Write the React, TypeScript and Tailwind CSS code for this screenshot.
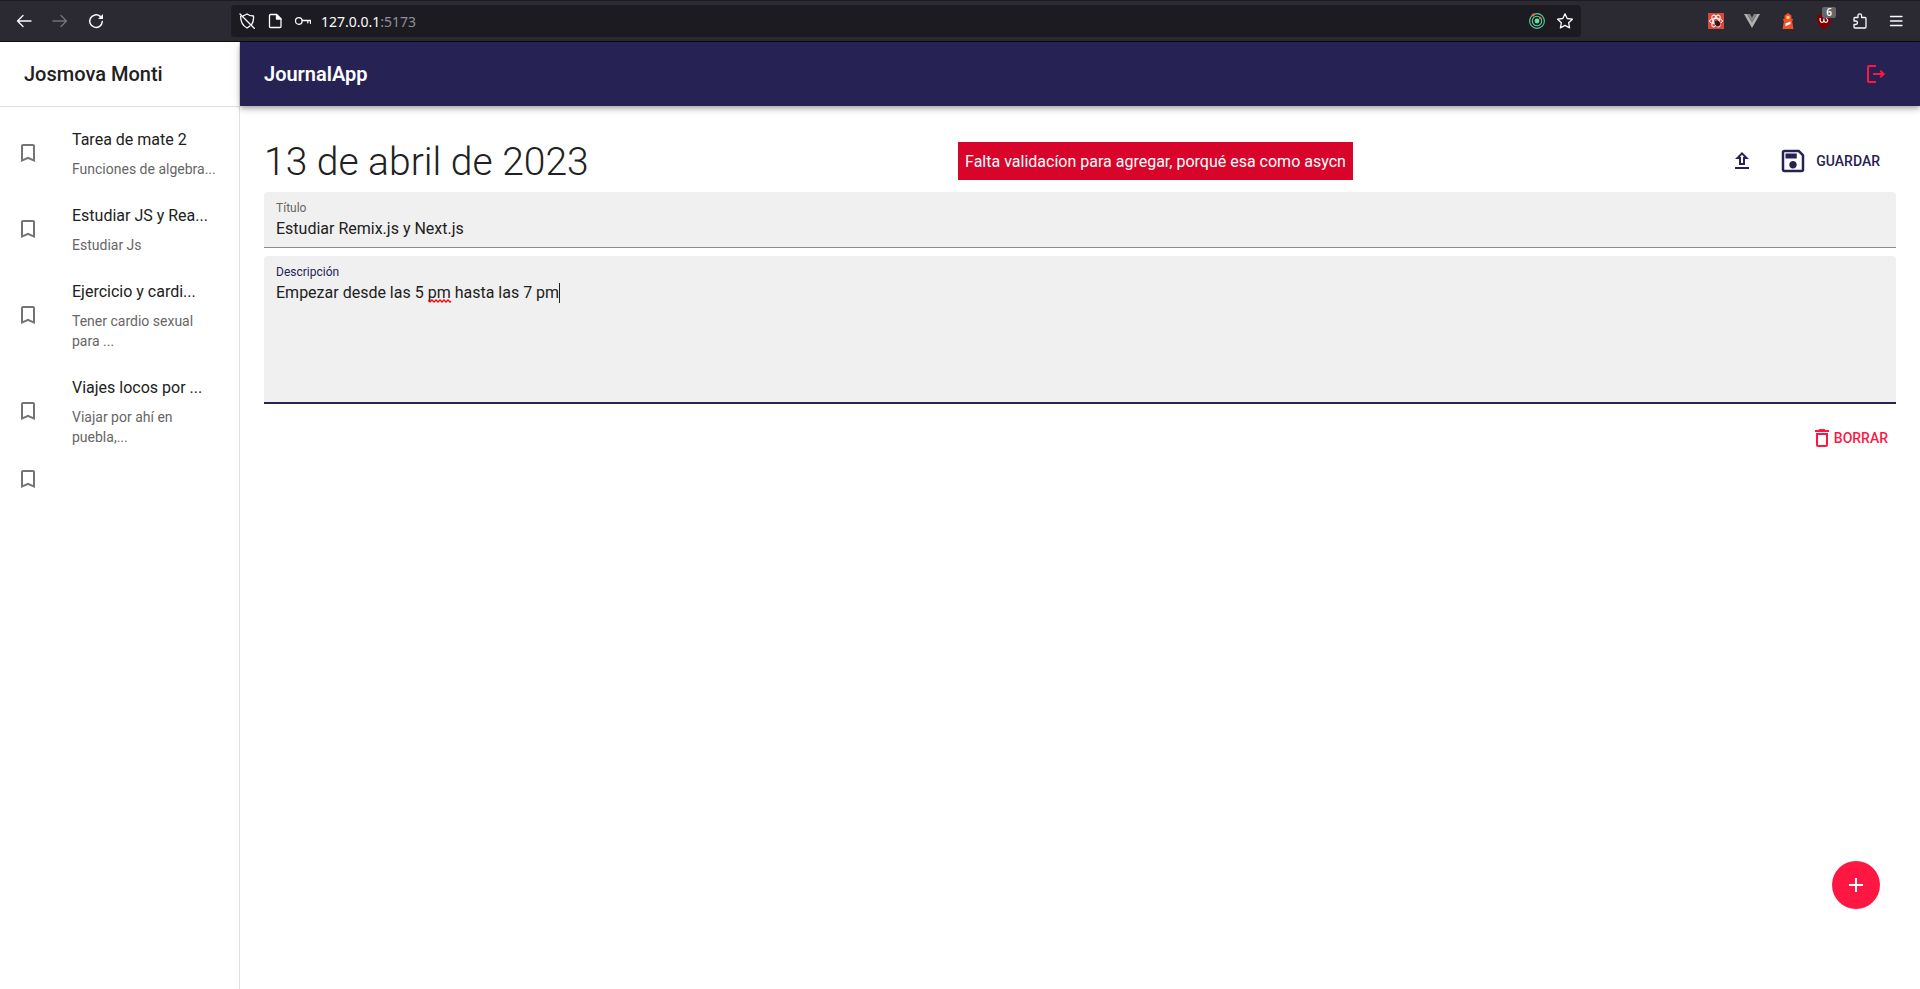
import React from 'react';

type IconProps = { d: string; className?: string };

function Icon({ d, className = 'size-6' }: IconProps) {
  return (
    <svg viewBox="0 0 24 24" className={`shrink-0 ${className}`} fill="currentColor" aria-hidden="true">
      <path d={d} />
    </svg>
  );
}

const paths = {
  bookmark: 'M17 3H7c-1.1 0-1.99.9-1.99 2L5 21l7-3 7 3V5c0-1.1-.9-2-2-2zm0 15-5-2.18L7 18V5h10v13z',
  logout:
    'm17 8-1.41 1.41L17.17 11H9v2h8.17l-1.58 1.58L17 16l4-4-4-4zM5 5h7V3H5c-1.1 0-2 .9-2 2v14c0 1.1.9 2 2 2h7v-2H5V5z',
  upload: 'M9 16h6v-6h4l-7-7-7 7h4v6zm3-10.17L14.17 8H13v6h-2V8H9.83L12 5.83zM5 18h14v2H5z',
  save: 'M17 3H5c-1.11 0-2 .9-2 2v14c0 1.1.89 2 2 2h14c1.1 0 2-.9 2-2V7l-4-4zm2 16H5V5h11.17L19 7.83V19zm-7-7c-1.66 0-3 1.34-3 3s1.34 3 3 3 3-1.34 3-3-1.34-3-3-3zM6 6h9v4H6z',
  trash: 'M6 19c0 1.1.9 2 2 2h8c1.1 0 2-.9 2-2V7H6v12zM8 9h8v10H8V9zm7.5-5-1-1h-5l-1 1H5v2h14V4z',
  add: 'M19 13h-6v6h-2v-6H5v-2h6V5h2v6h6v2z',
};

type LineIconProps = { children: React.ReactNode; className?: string };

function LineIcon({ children, className = '' }: LineIconProps) {
  return (
    <svg
      viewBox="0 0 16 16"
      className={`size-4 shrink-0 ${className}`}
      fill="none"
      stroke="currentColor"
      strokeWidth="1.3"
      strokeLinecap="round"
      strokeLinejoin="round"
      aria-hidden="true"
    >
      {children}
    </svg>
  );
}

function BrowserBar() {
  return (
    <header className="flex h-[42px] shrink-0 items-center border-t border-b border-t-[#1c1b22] border-b-[#0c0c0d] bg-[#2b2a33] text-[#fbfbfe]">
      <nav className="flex w-[231px] shrink-0 items-center gap-5 pl-4" aria-label="Navegador">
        <button type="button" aria-label="Atrás">
          <LineIcon>
            <path d="M15 8H1.5M7 2.5 1.5 8 7 13.5" />
          </LineIcon>
        </button>
        <button type="button" aria-label="Adelante" className="text-[#74737a]">
          <LineIcon>
            <path d="M1 8h13.5M9 2.5 14.5 8 9 13.5" />
          </LineIcon>
        </button>
        <button type="button" aria-label="Recargar">
          <LineIcon>
            <path d="M14.3 8.5A6.3 6.3 0 1 1 12.2 3.4" strokeWidth="1.5" />
            <path d="M15 1v5h-5z" fill="currentColor" stroke="none" />
          </LineIcon>
        </button>
      </nav>
      <div className="flex h-8 w-[1350px] min-w-0 items-center rounded bg-[#1c1b22] px-2">
        <LineIcon>
          <path d="M4.5 2.6C6 2.300 7 1.700 8 1c1.700 1.300 3.700 2 6.500 2 .3 3.500-.3 6.300-1.900 8.600M1.600 3.300c0 5.400 1.500 9.200 6.400 11.700 1.100-.6 2-1.200 2.800-2M1 1l14.500 14.500" />
        </LineIcon>
        <LineIcon className="ml-3">
          <path d="M3.5 1.500h6L14 6v7.500a1 1 0 0 1-1 1H3.500a1 1 0 0 1-1-1v-11a1 1 0 0 1 1-1z" />
          <path d="M9.500 1.500V6H14z" fill="currentColor" />
        </LineIcon>
        <LineIcon className="ml-3">
          <circle cx="3.8" cy="8" r="3.300" />
          <path d="M7.200 7.500h8.300v2.800M12.800 7.500v2.300" />
        </LineIcon>
        <div className="ml-2.5 flex-1 pt-0.5 font-['Noto_Sans',sans-serif] text-sm">
          127.0.0.1<span className="text-[#8f8f9d]">:5173</span>
        </div>
        <svg viewBox="0 0 16 16" className="size-4 shrink-0" fill="none" stroke="#5ad1a0" strokeWidth="1.1">
          <circle cx="8" cy="8" r="7.4" />
          <circle cx="8" cy="8" r="4.7" />
          <circle cx="8" cy="8" r="2.4" fill="#5ee6a8" stroke="none" />
          <circle cx="4.2" cy="1.9" r="1.5" fill="#f26b2c" stroke="none" />
          <circle cx="11.2" cy="5" r="1.3" fill="#f26b2c" stroke="none" />
        </svg>
        <button type="button" aria-label="Marcador" className="ml-3">
          <LineIcon>
            <path d="m8 .8 2.200 4.700 5.200.7-3.800 3.500 1 5.200L8 12.400l-4.600 2.500 1-5.200L.6 6.200l5.200-.7z" />
          </LineIcon>
        </button>
      </div>
      <div className="ml-auto flex items-center gap-5 pr-4">
        <svg viewBox="0 0 16 16" className="size-4" fill="none">
          <path fill="#d9483b" d="M0 0h16v16H0z" />
          <g stroke="#fff" strokeWidth="1">
            <ellipse cx="8" cy="8" rx="6.5" ry="2.6" />
            <ellipse cx="8" cy="8" rx="6.5" ry="2.6" transform="rotate(60 8 8)" />
            <ellipse cx="8" cy="8" rx="6.5" ry="2.6" transform="rotate(120 8 8)" />
          </g>
          <ellipse cx="9.5" cy="10.500" rx="2.600" ry="3" fill="#3b1310" transform="rotate(-40 9.500 10.500)" />
        </svg>
        <svg viewBox="0 0 16 16" className="size-4">
          <path fill="#b0b0b0" d="M0 1h3.200L8 9.300 12.800 1H16L8 15z" />
          <path fill="#858585" d="M3.200 1H6l2 3.500L10 1h2.800L8 9.300z" />
        </svg>
        <svg viewBox="0 0 16 16" className="size-4">
          <path fill="#f0512d" d="M8 0 4.500 2.500V6H3v1.500h1L2.500 16h11L12 7.500h1V6h-1.500V2.500z" />
          <circle cx="8" cy="4.500" r="1.700" fill="#ffd76a" />
          <path fill="#fff" d="m5.500 10.500 5-2v2.500l-5 2.200z" />
        </svg>
        <div className="relative">
          <svg viewBox="0 0 16 16" className="size-4">
            <path fill="#800000" d="M8 0c2 1.500 4 2 7 2 0 6 .2 10.500-7 14C.8 12.500 1 8 1 2c3 0 5-.5 7-2z" />
            <path
              d="M4.200 5v2.500a1.800 1.800 0 0 0 3.700 0V5.500v2a1.900 1.900 0 1 0 2-2"
              fill="none"
              stroke="#fff"
              strokeWidth="1.2"
            />
          </svg>
          <span className="absolute -top-1.5 left-1.5 h-[11px] w-[14px] rounded-[2px] bg-[#666] text-center font-['Noto_Sans',sans-serif] text-[10px] leading-[11px] font-semibold text-white">
            6
          </span>
        </div>
        <button type="button" aria-label="Extensiones">
          <LineIcon>
            <path d="M2 8V5.500a1 1 0 0 1 1-1h3V2.600a1.800 1.800 0 0 1 3.600 0v1.900H13a1 1 0 0 1 1 1V14a1 1 0 0 1-1 1H3a1 1 0 0 1-1-1v-2.500h1.700a1.750 1.750 0 0 0 0-3.500z" />
          </LineIcon>
        </button>
        <button type="button" aria-label="Menú">
          <LineIcon>
            <path d="M2.500 3.500h11.500M2.500 8h11.500M2.500 12.500h11.500" />
          </LineIcon>
        </button>
      </div>
    </header>
  );
}

const notes = [
  { title: 'Tarea de mate 2', body: 'Funciones de algebra...' },
  { title: 'Estudiar JS y Rea...', body: 'Estudiar Js' },
  { title: 'Ejercicio y cardi...', body: 'Tener cardio sexual para ...' },
  { title: 'Viajes locos por ...', body: 'Viajar por ahí en puebla,...' },
  { title: '', body: '' },
];

function Sidebar() {
  return (
    <aside className="w-60 shrink-0 border-r border-[#e0e0e0]">
      <div className="flex h-[65px] items-center border-b border-[#e0e0e0] px-6">
        <h2 className="text-xl font-medium">Josmova Monti</h2>
      </div>
      <ul className="py-2">
        {notes.map((note, i) => (
          <li key={i}>
            <button
              type="button"
              aria-label={note.title || 'Nota sin título'}
              className="flex w-full items-center px-4 py-2 text-left"
            >
              <span className="w-14 shrink-0 text-[#757575]">
                <Icon d={paths.bookmark} />
              </span>
              {note.title && (
                <span className="flex flex-col gap-[7px] pt-[5px] pb-1">
                  <span className="text-base">{note.title}</span>
                  <span className="text-sm text-[#666]">{note.body}</span>
                </span>
              )}
            </button>
          </li>
        ))}
      </ul>
    </aside>
  );
}

export default function App() {
  const [title, setTitle] = React.useState('Estudiar Remix.js y Next.js');
  const [body, setBody] = React.useState('Empezar desde las 5 pm hasta las 7 pm');

  return (
    <div className="flex min-h-screen flex-col bg-white font-[Roboto,sans-serif] text-[#212121]">
      <BrowserBar />
      <div className="flex flex-1">
        <Sidebar />
        <div className="flex min-w-0 flex-1 flex-col">
          <header className="flex h-16 items-center justify-between bg-[#262254] px-6 text-white shadow-[0_2px_4px_-1px_rgba(0,0,0,0.2),0_4px_5px_0_rgba(0,0,0,0.14),0_1px_10px_0_rgba(0,0,0,0.12)]">
            <h1 className="text-xl font-semibold">JournalApp</h1>
            <button type="button" aria-label="Cerrar sesión" className="p-2 text-[#ff1744]">
              <Icon d={paths.logout} />
            </button>
          </header>
          <main className="p-6">
            <div className="flex items-center justify-between">
              <h2 className="pt-0.5 text-[39px] leading-[48px] font-light">13 de abril de 2023</h2>
              <p role="alert" className="bg-[#d90429] px-[7px] pt-2 pb-1.5 text-base text-white">
                Falta validacíon para agregar, porqué esa como asycn
              </p>
              <div className="flex items-center text-[#262254]">
                <button type="button" aria-label="Subir imagen" className="p-2">
                  <Icon d={paths.upload} />
                </button>
                <button type="button" className="flex items-center gap-2 p-4 text-sm font-medium">
                  <Icon d={paths.save} className="size-[30px]" />
                  GUARDAR
                </button>
              </div>
            </div>
            <div className="flex flex-col gap-2">
              <div className="flex h-14 flex-col gap-px rounded-t border-b border-[#8c8c8c] bg-[#f0f0f0] px-3 pt-2">
                <label htmlFor="title" className="text-xs text-[#666]">
                  Título
                </label>
                <input
                  id="title"
                  type="text"
                  value={title}
                  onChange={(e) => setTitle(e.target.value)}
                  className="h-6 bg-transparent text-base outline-none"
                />
              </div>
              <div className="flex flex-col gap-px rounded-t border-b-2 border-[#262254] bg-[#f0f0f0] px-3 pt-2 pb-px">
                <label htmlFor="body" className="text-xs text-[#262254]">
                  Descripción
                </label>
                <div className="relative flex">
                  <textarea
                    id="body"
                    rows={5}
                    spellCheck={false}
                    value={body}
                    onChange={(e) => setBody(e.target.value)}
                    className="block flex-1 resize-none bg-transparent text-base outline-none"
                  />
                  <div
                    aria-hidden="true"
                    className="pointer-events-none absolute inset-0 flex items-start text-base whitespace-pre text-transparent"
                  >
                    <span>Empezar desde las 5 </span>
                    <span className="relative">
                      pm
                      <svg viewBox="0 0 24 4" className="absolute bottom-0.5 left-0 h-1 w-6" fill="none">
                        <path
                          d="M0 1.500 2 3l2-2 2 2 2-2 2 2 2-2 2 2 2-2 2 2 2-2 2 2 1-1"
                          stroke="#f00"
                          strokeWidth="1.3"
                        />
                      </svg>
                    </span>
                    <span> hasta las 7 pm</span>
                    <span className="mt-0.5 h-5 w-px bg-[#212121]" />
                  </div>
                </div>
              </div>
            </div>
            <div className="flex justify-end pt-4">
              <button type="button" className="flex items-center px-2 py-1.5 text-sm font-medium text-[#ff1744]">
                <Icon d={paths.trash} />
                BORRAR
              </button>
            </div>
          </main>
        </div>
      </div>
      <button
        type="button"
        aria-label="Agregar nota"
        className="fixed right-10 bottom-20 flex size-12 items-center justify-center rounded-full bg-[#ff1744] text-white"
      >
        <Icon d={paths.add} />
      </button>
    </div>
  );
}
